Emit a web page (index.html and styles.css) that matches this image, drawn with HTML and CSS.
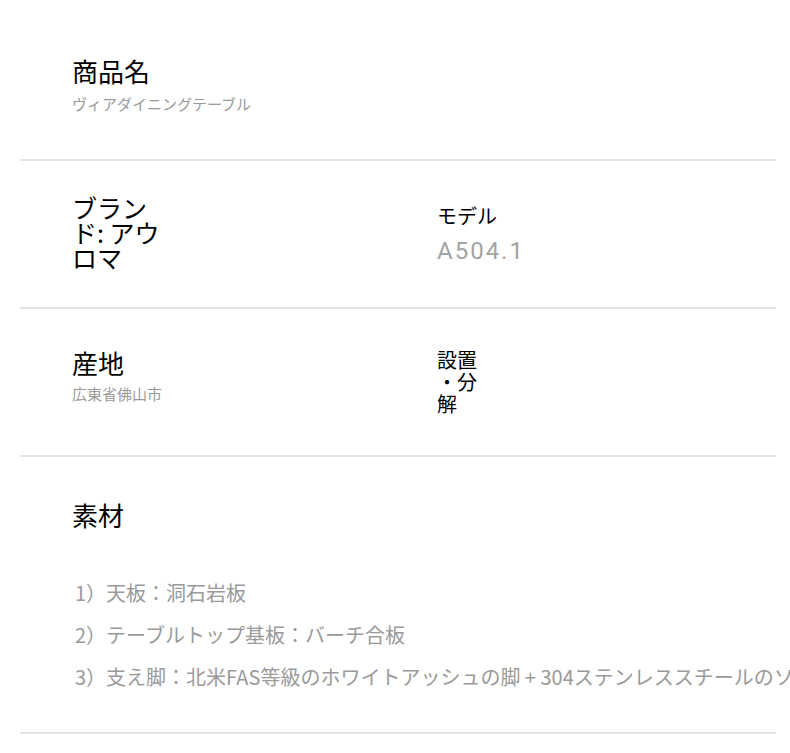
FILE: index.html
```html
<!DOCTYPE html>
<html lang="ja">
<head>
<meta charset="utf-8">
<title>商品仕様</title>
<link rel="stylesheet" href="styles.css">
</head>
<body>
<div class="spec">
  <section class="row row-name">
    <div class="field">
      <div class="label lg">商品名</div>
      <div class="value sm name-value">ヴィアダイニングテーブル</div>
    </div>
  </section>

  <section class="row cols row-brand">
    <div class="field">
      <div class="label brand">ブランド: アウロマ</div>
    </div>
    <div class="field model">
      <div class="label md">モデル</div>
      <div class="value num">A504.1</div>
    </div>
  </section>

  <section class="row cols row-origin">
    <div class="field">
      <div class="label lg">産地</div>
      <div class="value sm origin-value">広東省佛山市</div>
    </div>
    <div class="field setup">
      <div class="label md stacked">設置<br>・分<br>解</div>
    </div>
  </section>

  <section class="row row-material">
    <div class="field">
      <div class="label lg">素材</div>
      <ul class="list">
        <li>1）天板：洞石岩板</li>
        <li>2）テーブルトップ基板：バーチ合板</li>
        <li>3）支え脚：北米FAS等級のホワイトアッシュの脚 + 304ステンレススチールのソール</li>
      </ul>
    </div>
  </section>
</div>
</body>
</html>
```

FILE: styles.css
```css
html, body {
  margin: 0;
  padding: 0;
  background: #ffffff;
  overflow-x: hidden;
}

body {
  font-family: "Noto Sans CJK JP", "Noto Sans", sans-serif;
  color: #000000;
}

.spec {
  padding: 0 14px 0 20px;
}

.row {
  border-bottom: 2px solid #e3e3e3;
  padding-left: 52px;
}

.cols {
  display: grid;
  grid-template-columns: 365px 1fr;
}

.row-name {
  padding-top: 55px;
  padding-bottom: 45px;
}

.row-brand {
  padding-top: 34px;
  padding-bottom: 37px;
}

.row-origin {
  padding-top: 38px;
  padding-bottom: 40px;
}

.row-material {
  padding-top: 42px;
  padding-bottom: 34px;
}

.label {
  color: #000000;
}

.lg {
  font-size: 26px;
  line-height: 32px;
}

.md {
  font-size: 20px;
  line-height: 24px;
}

.brand {
  font-size: 25px;
  line-height: 25px;
  width: 92px;
}

.value {
  color: #9a9a9a;
}

.sm {
  font-size: 15px;
  line-height: 20px;
}

.name-value {
  margin-top: 7px;
}

.origin-value {
  margin-top: 5px;
}

.model {
  padding-top: 9px;
}

.num {
  font-family: Roboto, "Liberation Sans", sans-serif;
  font-size: 24px;
  line-height: 28px;
  letter-spacing: 2px;
  margin-top: 9px;
  color: #a3a3a3;
}

.setup {
  padding-top: 2px;
}

.stacked {
  line-height: 22px;
}

.list {
  list-style: none;
  margin: 41px 0 0 3px;
  padding: 0;
  color: #9a9a9a;
  font-size: 20px;
  line-height: 42px;
  white-space: nowrap;
}
```
